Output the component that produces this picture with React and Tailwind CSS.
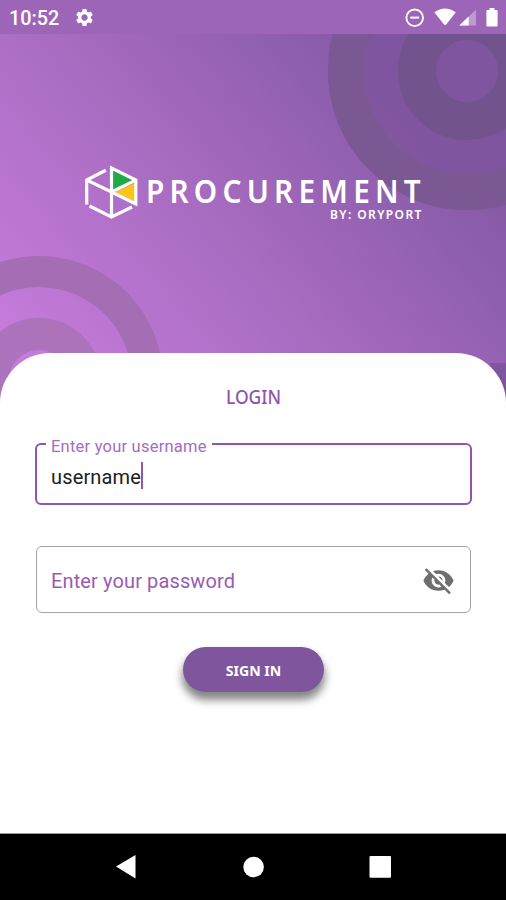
import React from "react";
import { MdSettings, MdVisibilityOff } from "react-icons/md";

function StatusBar() {
  return (
    <div className="relative flex h-[34px] items-center justify-between bg-[#9d65b7] text-white">
      <div className="flex items-center pl-[9px] pt-[2px]">
        <span className="w-[51px] whitespace-nowrap pt-[2px] font-[Roboto] text-[19.8px] font-medium leading-none">10:52</span>
        <MdSettings className="ml-[14px] h-[21px] w-[21px]" />
      </div>
      <svg className="h-[34px] w-[106px]" viewBox="400 0 106 34" fill="none">
        <circle cx="414.7" cy="17.8" r="8.3" stroke="white" strokeWidth="1.9" />
        <path d="M410.3 17.6h8.8" stroke="white" strokeWidth="2" />
        <path d="M434.4 12.2Q445 4.6 455.8 12.2L446.6 24.1Q445.1 25.8 443.6 24.1Z" fill="white" />
        <path d="M476 9.5V25.6H459.3Z" fill="white" fillOpacity="0.35" />
        <path d="M468.7 16.5V25.6H459.3Z" fill="white" />
        <path d="M489.5 8h5v2h2.1q1 0 1 1v14.5q0 1-1 1h-9.2q-1 0-1-1V11q0-1 1-1h2.1Z" fill="white" />
      </svg>
    </div>
  );
}

function Backdrop() {
  return (
    <svg className="absolute inset-0 h-[410px] w-[506px]" viewBox="0 0 506 410" fill="none">
      <defs>
        <linearGradient id="sky" gradientUnits="userSpaceOnUse" x1="20" y1="350" x2="370" y2="50">
          <stop offset="0" stopColor="#c57bdc" />
          <stop offset="0.4" stopColor="#ae6fc6" />
          <stop offset="0.67" stopColor="#9d65b8" />
          <stop offset="0.84" stopColor="#9060b0" />
          <stop offset="1" stopColor="#8659a6" />
        </linearGradient>
      </defs>
      <rect width="506" height="410" fill="url(#sky)" />
      <circle cx="467" cy="71" r="139" fill="#7f559d" fillOpacity="0.85" />
      <circle cx="467" cy="71" r="121" stroke="#7b5793" strokeWidth="36" />
      <circle cx="467" cy="71" r="50" stroke="#72538d" strokeWidth="38" />
      <circle cx="39" cy="380" r="108.5" stroke="#a26db2" strokeWidth="31" strokeOpacity="0.95" />
      <circle cx="39" cy="380" r="46" stroke="#aa72b8" strokeWidth="32" strokeOpacity="0.9" />
      <path d="M490 363H506V410H490Z" fill="#765094" fillOpacity="0.7" />
    </svg>
  );
}

function Logo() {
  return (
    <div className="relative flex pl-[84px] pt-[131px] text-white">
      <svg className="h-[55px] w-[56px] shrink-0" viewBox="84 165 56 55" fill="none">
        <path d="M113 170.5L132.3 180 113 189.5Z" fill="#1dac43" />
        <path d="M135 183V202L115 192Z" fill="#fdc418" />
        <g stroke="white" strokeWidth="3.2">
          <path d="M105.8 170.3L86.7 180V204.5" />
          <path d="M86.7 180L111.5 192 135.8 180.1" />
          <path d="M111.5 217V168L135.8 180.1V204L111.5 192" />
          <path d="M89.5 206L111.5 217 132 207" />
        </g>
      </svg>
      <div className="w-[290px] pl-[6px] pt-[13px] font-['Noto_Sans']">
        <div className="h-[28px] origin-left scale-x-[0.93] whitespace-nowrap text-[32px] font-semibold leading-[26px] tracking-[5.6px]">PROCUREMENT</div>
        <div className="ml-[184px] mt-[3px] whitespace-nowrap text-[12px] font-semibold leading-[12px] tracking-[1.4px]">BY: ORYPORT</div>
      </div>
    </div>
  );
}

export default function App() {
  return (
    <div className="flex h-[900px] w-[506px] flex-col overflow-hidden bg-white font-[Roboto]">
      <header className="relative h-[410px] shrink-0">
        <Backdrop />
        <StatusBar />
        <Logo />
      </header>

      <main className="relative -mt-[57px] flex h-[480px] shrink-0 flex-col rounded-t-[50px] bg-white px-[35px]">
        <h1 className="mt-[32px] h-[24px] text-center font-['Noto_Sans'] text-[19px] font-medium leading-[24px] text-[#8e55aa]">
          <span className="inline-block translate-x-[0.5px] scale-x-[0.92]">LOGIN</span>
        </h1>
        <div className="relative mt-[34px] flex h-[62px] w-[437px] items-center rounded-[6px] border-[2.5px] border-[#8e57ac] pl-[14px]">
          <span className="absolute left-[9px] top-[-8px] w-[166px] whitespace-nowrap bg-white pl-[5px] text-[16.5px] leading-[20px] tracking-[0.22px] text-[#a56dc0]">Enter your username</span>
          <span className="mt-[6px] text-[20px] leading-[26px] tracking-[0.15px] text-[#202020]">username</span>
          <span className="mt-[3px] h-[27px] w-[2px] bg-[#8e57ac]" />
        </div>
        <div className="ml-[1px] mt-[41px] flex h-[67px] w-[435px] items-center justify-between rounded-[6px] border-[1.5px] border-[#a4a4a4] pl-[14px] pr-[15px]">
          <span className="pt-[3px] text-[20px] tracking-[0.12px] text-[#965db3]">Enter your password</span>
          <MdVisibilityOff className="mt-[2px] h-[33px] w-[33px] text-[#6e6e6e]" />
        </div>
        <button className="mt-[34px] h-[45px] w-[141px] self-center rounded-full bg-[#7f559d] pt-[2px] font-['Noto_Sans'] text-[15px] font-bold text-white shadow-[0_7px_9px_1px_rgba(0,0,0,0.48)]">
          <span className="inline-block translate-x-[1px] scale-x-[0.94]">SIGN IN</span>
        </button>
      </main>

      <nav className="flex h-[67px] shrink-0 items-center border-t border-[#999] bg-black">
        <svg className="h-[66px] w-[506px]" viewBox="0 834 506 66" fill="white">
          <path d="M116 866.5L135.5 855V878.5Z" />
          <circle cx="253.6" cy="867" r="10.3" />
          <rect x="369.5" y="856" width="21.5" height="21.7" rx="1" />
        </svg>
      </nav>
    </div>
  );
}
